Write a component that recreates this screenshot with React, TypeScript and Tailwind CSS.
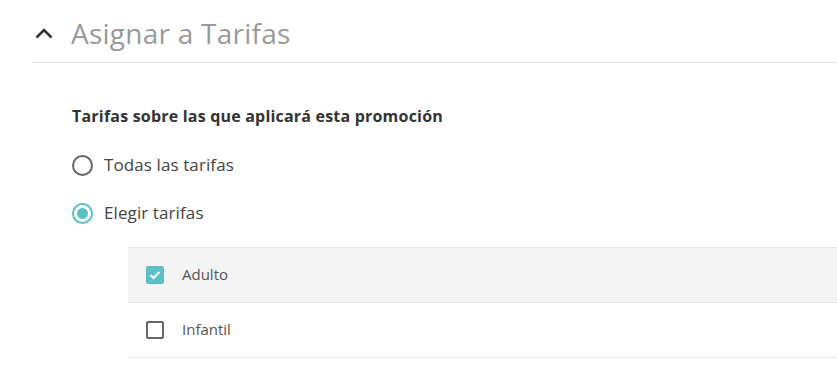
import React, { useState } from 'react';

const tarifas = ['Adulto', 'Infantil'];

export default function App() {
  const [mode, setMode] = useState<'todas' | 'elegir'>('elegir');
  const [checked, setChecked] = useState<Record<string, boolean>>({ Adulto: true, Infantil: false });

  return (
    <div className="w-[837px] h-[383px] bg-white overflow-hidden" style={{ fontFamily: '"Open Sans", "Lato", sans-serif' }}>
      <div className="pl-8">
        {/* Section header */}
        <div className="flex items-center h-[63px] border-b border-[#dcdcdc] pt-[4px]">
          <svg width="18" height="12" viewBox="0 0 18 12" className="ml-[3px] mr-[18px]">
            <path d="M1.5 10.5 L9 3 L16.5 10.5" fill="none" stroke="#333" strokeWidth="2.6" />
          </svg>
          <h2 className="text-[28px] tracking-[0.25px] text-[#999999] leading-none">Asignar a Tarifas</h2>
        </div>

        <div className="pl-10 pt-[43px]">
          <p className="text-[16px] tracking-[0.2px] font-bold text-[#333333] leading-5">Tarifas sobre las que aplicará esta promoción</p>

          <div className="mt-[28px] flex flex-col gap-[26px]">
            <label className="flex items-center gap-[11px] cursor-pointer" onClick={() => setMode('todas')}>
              <span className={`w-[21px] h-[21px] rounded-full border-2 flex items-center justify-center ${mode === 'todas' ? 'border-[#5bbfc8]' : 'border-[#666666]'}`}>
                {mode === 'todas' && <span className="w-[11px] h-[11px] rounded-full bg-[#5bbfc8]" />}
              </span>
              <span className="text-[17px] tracking-[0.1px] text-[#444444] leading-[22px]">Todas las tarifas</span>
            </label>
            <label className="flex items-center gap-[11px] cursor-pointer" onClick={() => setMode('elegir')}>
              <span className={`w-[21px] h-[21px] rounded-full border-2 flex items-center justify-center ${mode === 'elegir' ? 'border-[#5bbfc8]' : 'border-[#666666]'}`}>
                {mode === 'elegir' && <span className="w-[11px] h-[11px] rounded-full bg-[#5bbfc8]" />}
              </span>
              <span className="text-[17px] tracking-[0.1px] text-[#444444] leading-[22px]">Elegir tarifas</span>
            </label>
          </div>

          {/* Tarifas list */}
          <div className="mt-[23px] ml-[56px] border-t border-[#e6e6e6]">
            {tarifas.map((t) => (
              <div
                key={t}
                className={`flex items-center h-[55px] border-b border-[#e6e6e6] pl-[18px] cursor-pointer ${checked[t] ? 'bg-[#f4f4f4]' : 'bg-white'}`}
                onClick={() => setChecked((c) => ({ ...c, [t]: !c[t] }))}
              >
                {checked[t] ? (
                  <span className="w-[18px] h-[18px] rounded-[2px] bg-[#5bbfc8] flex items-center justify-center">
                    <svg width="12" height="10" viewBox="0 0 12 10">
                      <path d="M1.5 5 L4.5 8 L10.5 2" fill="none" stroke="#fff" strokeWidth="2" />
                    </svg>
                  </span>
                ) : (
                  <span className="w-[18px] h-[18px] rounded-[2px] border-2 border-[#666666]" />
                )}
                <span className="ml-[18px] text-[15px] text-[#555555] leading-5 mb-[3px]">{t}</span>
              </div>
            ))}
          </div>
        </div>
      </div>
    </div>
  );
}
